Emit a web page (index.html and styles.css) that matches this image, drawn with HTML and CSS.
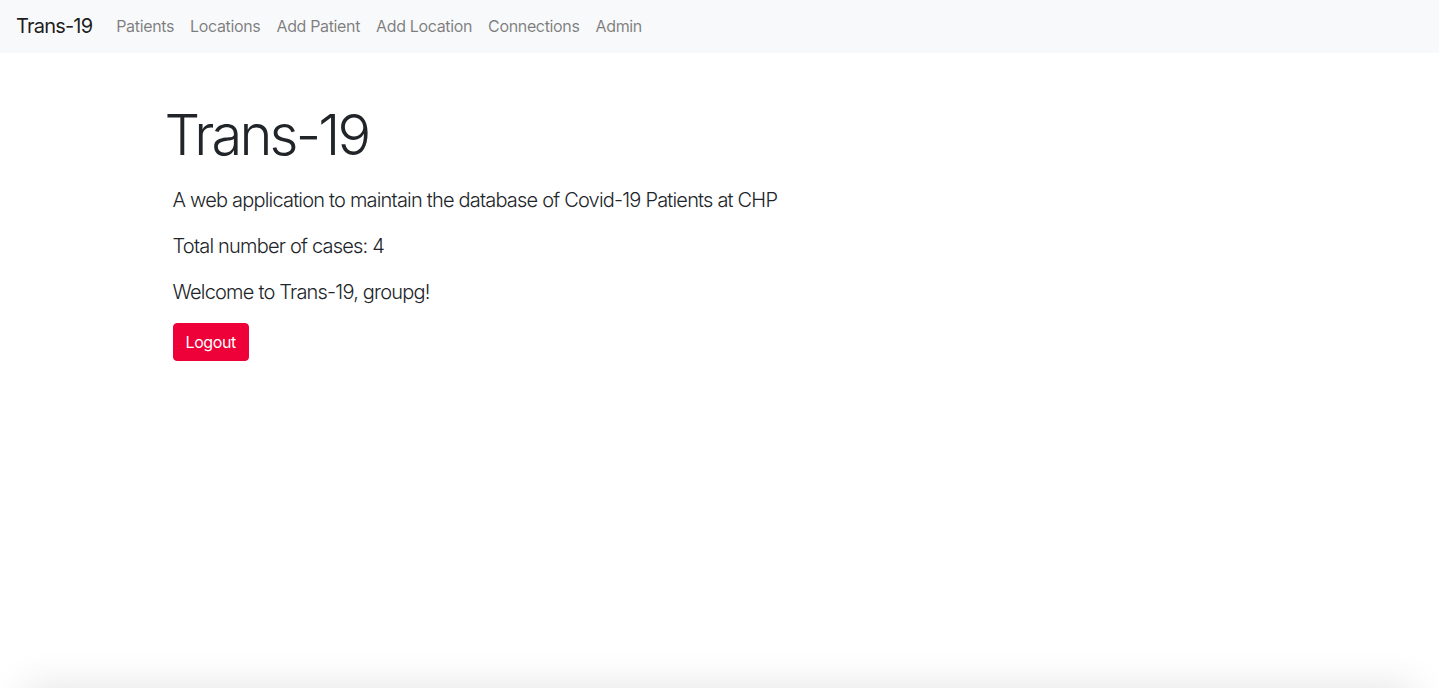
FILE: index.html
```html
<!DOCTYPE html>
<html lang="en">
<head>
<meta charset="utf-8">
<title>Trans-19</title>
<link rel="stylesheet" href="styles.css">
</head>
<body>
<div class="page">
  <nav class="navbar">
    <a class="brand" href="#">Trans-19</a>
    <ul class="nav">
      <li><a href="#">Patients</a></li>
      <li><a href="#">Locations</a></li>
      <li><a href="#">Add Patient</a></li>
      <li><a href="#">Add Location</a></li>
      <li><a href="#">Connections</a></li>
      <li><a href="#">Admin</a></li>
    </ul>
  </nav>
  <main class="container">
    <h1 class="display">Trans-19</h1>
    <div class="intro">
      <p class="lead">A web application to maintain the database of Covid-19 Patients at CHP</p>
      <p class="lead">Total number of cases: 4</p>
      <p class="lead">Welcome to Trans-19, groupg!</p>
      <button class="btn-danger" type="button">Logout</button>
    </div>
  </main>
</div>
<footer class="footer"></footer>
</body>
</html>
```

FILE: styles.css
```css
* { box-sizing: border-box; }
html, body { margin: 0; padding: 0; }
body {
  font-family: Inter, "Noto Sans", "Liberation Sans", sans-serif;
  color: #212529;
  background: #fff;
  font-size: 16px;
  line-height: 1.5;
  overflow-x: hidden;
}
.page {
  min-height: 688px;
}
.navbar {
  height: 53px;
  background: #f8f9fa;
  display: flex;
  align-items: center;
  padding: 0 16px 2px;
}
.brand {
  font-size: 20px;
  color: rgba(0,0,0,.9);
  text-decoration: none;
  margin-right: 16px;
  letter-spacing: -0.8px;
}
.nav {
  list-style: none;
  display: flex;
  margin: 0;
  padding: 0;
}
.nav a {
  display: block;
  padding: 8px 8px;
  color: rgba(0,0,0,.5);
  text-decoration: none;
  font-size: 16px;
  letter-spacing: -0.35px;
}
.container {
  width: 1140px;
  margin: 0 auto;
  padding: 49px 15px 0;
}
.display {
  font-size: 56px;
  font-weight: 300;
  line-height: 1.2;
  margin: 0 0 16px;
  letter-spacing: -2.8px;
}
.intro {
  padding: 0 8px;
}
.lead {
  font-size: 20px;
  font-weight: 300;
  margin: 0 0 16px;
  letter-spacing: -0.8px;
}
.btn-danger {
  font-family: inherit;
  font-size: 16px;
  line-height: 24px;
  color: #fff;
  background: #ee0038;
  border: 1px solid #ee0038;
  border-radius: 4px;
  padding: 6px 12px;
  letter-spacing: -0.4px;
}
.footer {
  height: 40px;
  margin: 0 25px;
  box-shadow: 0 0 40px rgba(0,0,0,.12);
}
```
